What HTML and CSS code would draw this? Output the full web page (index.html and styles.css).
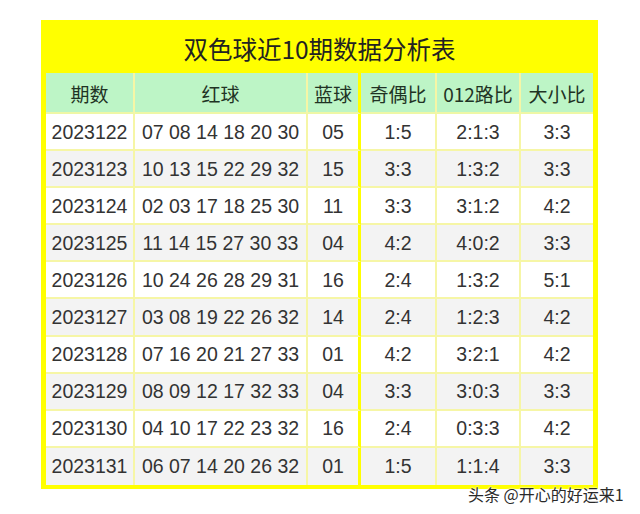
FILE: index.html
```html
<!DOCTYPE html>
<html lang="zh">
<head>
<meta charset="utf-8">
<title>双色球近10期数据分析表</title>
<link rel="stylesheet" href="styles.css">
</head>
<body>
<div class="page">
  <div class="sheet">
    <div class="title">双色球近10期数据分析表</div>
    <div class="grid">
      <div class="cell head">期数</div>
      <div class="cell head">红球</div>
      <div class="cell head blue">蓝球</div>
      <div class="cell head">奇偶比</div>
      <div class="cell head">012路比</div>
      <div class="cell head last">大小比</div>

      <div class="cell">2023122</div><div class="cell">07 08 14 18 20 30</div><div class="cell blue">05</div><div class="cell">1:5</div><div class="cell">2:1:3</div><div class="cell last">3:3</div>
      <div class="cell alt">2023123</div><div class="cell alt">10 13 15 22 29 32</div><div class="cell alt blue">15</div><div class="cell alt">3:3</div><div class="cell alt">1:3:2</div><div class="cell alt last">3:3</div>
      <div class="cell">2023124</div><div class="cell">02 03 17 18 25 30</div><div class="cell blue">11</div><div class="cell">3:3</div><div class="cell">3:1:2</div><div class="cell last">4:2</div>
      <div class="cell alt">2023125</div><div class="cell alt">11 14 15 27 30 33</div><div class="cell alt blue">04</div><div class="cell alt">4:2</div><div class="cell alt">4:0:2</div><div class="cell alt last">3:3</div>
      <div class="cell">2023126</div><div class="cell">10 24 26 28 29 31</div><div class="cell blue">16</div><div class="cell">2:4</div><div class="cell">1:3:2</div><div class="cell last">5:1</div>
      <div class="cell alt">2023127</div><div class="cell alt">03 08 19 22 26 32</div><div class="cell alt blue">14</div><div class="cell alt">2:4</div><div class="cell alt">1:2:3</div><div class="cell alt last">4:2</div>
      <div class="cell">2023128</div><div class="cell">07 16 20 21 27 33</div><div class="cell blue">01</div><div class="cell">4:2</div><div class="cell">3:2:1</div><div class="cell last">4:2</div>
      <div class="cell alt">2023129</div><div class="cell alt">08 09 12 17 32 33</div><div class="cell alt blue">04</div><div class="cell alt">3:3</div><div class="cell alt">3:0:3</div><div class="cell alt last">3:3</div>
      <div class="cell">2023130</div><div class="cell">04 10 17 22 23 32</div><div class="cell blue">16</div><div class="cell">2:4</div><div class="cell">0:3:3</div><div class="cell last">4:2</div>
      <div class="cell alt bottom">2023131</div><div class="cell alt bottom">06 07 14 20 26 32</div><div class="cell alt bottom blue">01</div><div class="cell alt bottom">1:5</div><div class="cell alt bottom">1:1:4</div><div class="cell alt bottom last">3:3</div>
    </div>
  </div>
  <div class="mark">头条 @开心的好运来1</div>
</div>
</body>
</html>
```
FILE: styles.css
```css
* { box-sizing: border-box; }
html, body { margin: 0; padding: 0; background: #ffffff; }
body {
  width: 640px;
  height: 514px;
  overflow: hidden;
  font-family: "Liberation Sans", "Noto Sans CJK SC", sans-serif;
  color: #333333;
}
.page {
  position: relative;
  width: 640px;
  height: 514px;
  padding: 20px 0 0 41px;
}
.sheet {
  width: 557px;
  border: 5px solid #ffff00;
  border-bottom-width: 4px;
  background: #ffff00;
}
.title {
  height: 48px;
  display: flex;
  align-items: center;
  justify-content: center;
  font-family: "Noto Sans CJK SC", "Liberation Sans", sans-serif;
  font-size: 24.5px;
  color: #222222;
  padding-bottom: 2px;
}
.grid {
  display: grid;
  grid-template-columns: 89px 173px 53px 76px 84px 72px;
  grid-template-rows: 41px;
  grid-auto-rows: 37.1px;
  background: #ffffff;
}
.cell {
  display: flex;
  align-items: center;
  justify-content: center;
  font-size: 19.5px;
  color: #333333;
  background: #ffffff;
  border-right: 2px solid #f6f6a6;
  border-bottom: 2px solid #f6f6a6;
  white-space: nowrap;
  padding-top: 1px;
}
.cell.alt { background: #f3f3f3; }
.cell.head {
  background: #bdf5c6;
  font-family: "Noto Sans CJK SC", "Liberation Sans", sans-serif;
  font-size: 19px;
  font-weight: 400;
  color: #1f3324;
  border-bottom-color: #eef7a6;
  padding-top: 2px;
}
.cell.blue { border-right: 3px solid #ffff00; }
.cell.last { border-right: none; }
.cell.bottom { border-bottom: none; }
.mark {
  position: absolute;
  left: 468px;
  top: 482px;
  font-family: "Noto Sans CJK SC", sans-serif;
  font-size: 16px;
  color: #2a2a2a;
  text-shadow: 0 0 2px #ffffff, 0 0 2px #ffffff;
  white-space: nowrap;
}
```
